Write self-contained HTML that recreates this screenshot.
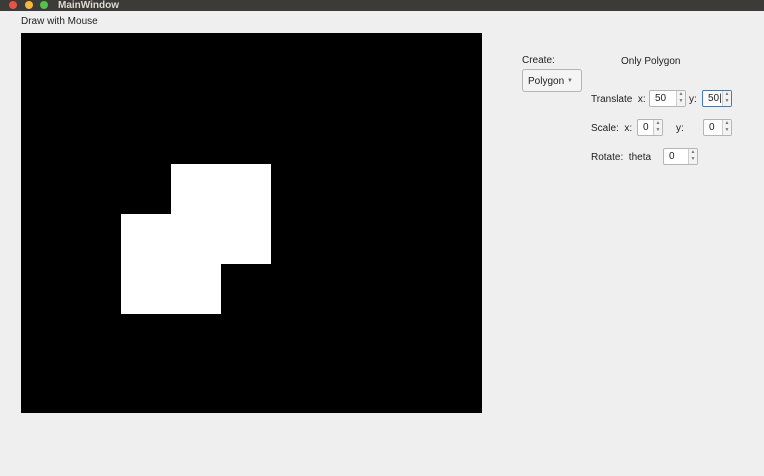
<!DOCTYPE html><html><head><style>
body{margin:0;width:764px;height:476px;background:#efefef;font-family:"Liberation Sans",sans-serif;font-size:10px;color:#222;position:relative;overflow:hidden}
.a{position:absolute}
.sp{position:absolute;height:17px;border:1px solid #b5b5b5;border-radius:2px;background:#fff;box-sizing:border-box;font-size:10px;line-height:15px;padding-left:5px}
.sp i{position:absolute;right:0;top:0;bottom:0;width:8px;border-left:1px solid #ccc;background:#f3f3f3;font-style:normal;font-size:5px;line-height:7px;text-align:center;color:#777}
</style></head><body>
<div class="a" style="left:0;top:0;width:764px;height:11px;background:#3c3b37"></div>
<div class="a" style="left:9px;top:1px;width:8px;height:8px;border-radius:50%;background:#e9524a"></div>
<div class="a" style="left:25px;top:1px;width:8px;height:8px;border-radius:50%;background:#f6b73e"></div>
<div class="a" style="left:40px;top:1px;width:8px;height:8px;border-radius:50%;background:#4fc34a"></div>
<div class="a" style="left:58px;top:0px;color:#dfdbd2;font-weight:bold;font-size:10px">MainWindow</div>
<div class="a" style="left:21px;top:16px">Draw with Mouse</div>
<div class="a" style="left:21px;top:33px;width:461px;height:380px;background:#000"></div>
<div class="a" style="left:171px;top:164px;width:100px;height:100px;background:#fff"></div>
<div class="a" style="left:121px;top:214px;width:100px;height:100px;background:#fff"></div>
<div class="a" style="left:522px;top:55px">Create:</div>
<div class="a" style="left:621px;top:56px">Only Polygon</div>
<div class="a" style="left:522px;top:69px;width:60px;height:23px;border:1px solid #b5b5b5;border-radius:3px;box-sizing:border-box;background:#f4f4f4;line-height:23px;padding-left:5px">Polygon<span style="position:absolute;right:8px;font-size:6px;color:#666">▼</span></div>
<div class="a" style="left:591px;top:94px">Translate&nbsp; x:</div>
<div class="sp" style="left:649px;top:90px;width:37px">50<i>▲<br>▼</i></div>
<div class="a" style="left:689px;top:94px">y:</div>
<div class="sp" style="left:702px;top:90px;width:30px;border-color:#3d7bc4">50|<i>▲<br>▼</i></div>
<div class="a" style="left:591px;top:123px">Scale:&nbsp; x:</div>
<div class="sp" style="left:637px;top:119px;width:26px">0<i>▲<br>▼</i></div>
<div class="a" style="left:676px;top:123px">y:</div>
<div class="sp" style="left:703px;top:119px;width:29px">0<i>▲<br>▼</i></div>
<div class="a" style="left:591px;top:152px">Rotate:&nbsp; theta</div>
<div class="sp" style="left:663px;top:148px;width:35px">0<i>▲<br>▼</i></div>
</body></html>
